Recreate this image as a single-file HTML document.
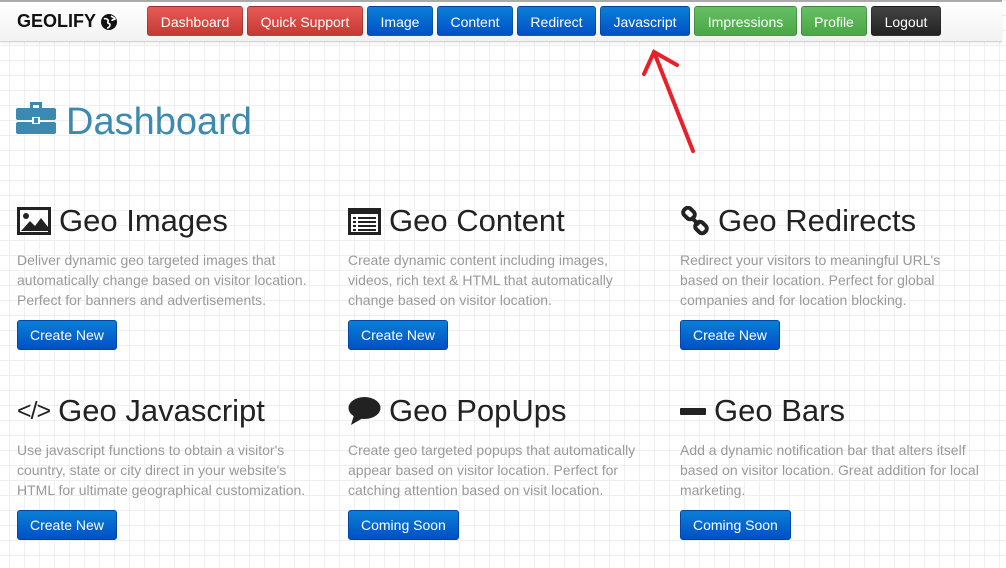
<!DOCTYPE html>
<html><head><style>
*{margin:0;padding:0;box-sizing:border-box}
body{width:1006px;height:568px;overflow:hidden;font-family:"Liberation Sans",sans-serif;background-color:#fff;
background-image:linear-gradient(#efefef 1px,transparent 1px),linear-gradient(90deg,#efefef 1px,transparent 1px);background-size:15px 15px;background-position:9px 0;position:relative}
.nav{position:absolute;left:0;top:0;width:1002px;height:42px;background:linear-gradient(#fff,#f2f2f2);border-top:2px solid #aaa;border-bottom:1px solid #d4d4d4;box-shadow:0 1px 3px rgba(0,0,0,.08)}
.brand{position:absolute;left:17px;top:9px;font-weight:bold;font-size:18px;color:#111;display:flex;align-items:center;gap:5px}
.b{position:absolute;top:4px;height:30px;border-radius:3px;color:#fff;font-size:14px;line-height:30px;text-align:center;border:1px solid rgba(0,0,0,.2)}
.r{background:linear-gradient(#e85a56,#c43a33)}
.bl{background:linear-gradient(#0a7fd6,#0050c6)}
.g{background:linear-gradient(#66c064,#4ba647)}
.k{background:linear-gradient(#444,#222)}
h1{position:absolute;left:66px;top:101px;font-size:38px;font-weight:normal;color:#3d8ab0}
.col{position:absolute;width:300px}
.col h2{font-size:31px;font-weight:normal;color:#222;height:38px;display:flex;align-items:center;gap:8px;white-space:nowrap}
.col p{margin-top:10px;font-size:14px;line-height:20px;color:#999}
.btn{display:inline-block;margin-top:10px;height:30px;line-height:28px;padding:0 12px;border-radius:3px;color:#fff;font-size:14px;background:linear-gradient(#0a7fd6,#0050c6);border:1px solid #0048a8}
</style></head><body>
<div class="nav">
<div class="brand">GEOLIFY <svg width="16" height="16" viewBox="0 0 16 16"><circle cx="8" cy="8" r="8" fill="#111"/><path d="M3 5c2-1 3 0 4 1s-1 2 0 3 2 0 2 2-2 3-3 3M10 2c1 1 3 1 4 3-1 1-3 0-3 2" fill="none" stroke="#fff" stroke-width="1.6"/></svg></div>
<div class="b r" style="left:147px;width:96px">Dashboard</div>
<div class="b r" style="left:247px;width:116px">Quick Support</div>
<div class="b bl" style="left:367px;width:66px">Image</div>
<div class="b bl" style="left:437px;width:76px">Content</div>
<div class="b bl" style="left:517px;width:79px">Redirect</div>
<div class="b bl" style="left:600px;width:90px">Javascript</div>
<div class="b g" style="left:694px;width:103px">Impressions</div>
<div class="b g" style="left:801px;width:66px">Profile</div>
<div class="b k" style="left:871px;width:70px">Logout</div>
</div>
<svg style="position:absolute;left:640px;top:48px" width="60" height="110"><g stroke="#e8202a" stroke-width="4" fill="none" stroke-linecap="round"><path d="M53 103L14 4M4 26L14 4L37 17"/></g></svg>
<svg style="position:absolute;left:16px;top:101px" width="40" height="34" viewBox="0 0 40 34"><path d="M14 1h12v6h-3V4h-6v3h-3z" fill="#3d8ab0"/><rect x="0" y="7" width="40" height="12" rx="2" fill="#3d8ab0"/><rect x="0" y="21" width="40" height="12" rx="2" fill="#3d8ab0"/><rect x="16" y="16" width="8" height="7" fill="#fff"/><rect x="18" y="17" width="4" height="5" fill="#3d8ab0"/></svg>
<h1>Dashboard</h1>

<div class="col" style="left:17px;top:202px"><h2><svg width="34" height="28"><rect x="1.5" y="1.5" width="31" height="25" fill="none" stroke="#222" stroke-width="3"/><circle cx="9" cy="9" r="3" fill="#222"/><path d="M4 24L13 14l5 5 6-8 7 9v4z" fill="#222"/></svg>Geo Images</h2>
<p>Deliver dynamic geo targeted images that automatically change based on visitor location. Perfect for banners and advertisements.</p><span class="btn">Create New</span></div>
<div class="col" style="left:348px;top:202px"><h2><svg width="33" height="27"><rect x="1.5" y="1.5" width="30" height="24" fill="none" stroke="#222" stroke-width="3"/><rect x="1" y="1" width="31" height="5" fill="#222"/><g fill="#222"><rect x="5" y="9" width="3" height="2"/><rect x="10" y="9" width="18" height="2"/><rect x="5" y="13" width="3" height="2"/><rect x="10" y="13" width="18" height="2"/><rect x="5" y="17" width="3" height="2"/><rect x="10" y="17" width="18" height="2"/><rect x="5" y="21" width="3" height="2"/><rect x="10" y="21" width="18" height="2"/></g></svg>Geo Content</h2>
<p>Create dynamic content including images, videos, rich text &amp; HTML that automatically change based on visitor location.</p><span class="btn">Create New</span></div>
<div class="col" style="left:680px;top:202px"><h2><svg width="30" height="30"><g fill="none" stroke="#222" stroke-width="4"><rect x="3" y="3" width="12" height="9" rx="4" transform="rotate(45 9 7.5)"/><rect x="15" y="17" width="12" height="9" rx="4" transform="rotate(45 21 21.5)"/><path d="M11 11l8 8"/></g></svg>Geo Redirects</h2>
<p>Redirect your visitors to meaningful URL's based on their location. Perfect for global companies and for location blocking.</p><span class="btn">Create New</span></div>

<div class="col" style="left:17px;top:392px"><h2><span style="font-size:25px;letter-spacing:-1px">&lt;/&gt;</span>Geo Javascript</h2>
<p>Use javascript functions to obtain a visitor's country, state or city direct in your website's HTML for ultimate geographical customization.</p><span class="btn">Create New</span></div>
<div class="col" style="left:348px;top:392px"><h2><svg width="33" height="30"><ellipse cx="16.5" cy="12" rx="16" ry="11" fill="#222"/><path d="M6 19L3 29l12-7z" fill="#222"/></svg>Geo PopUps</h2>
<p>Create geo targeted popups that automatically appear based on visitor location. Perfect for catching attention based on visit location.</p><span class="btn">Coming Soon</span></div>
<div class="col" style="left:680px;top:392px"><h2><svg width="26" height="10"><rect y="2" width="26" height="7" rx="1" fill="#222"/></svg>Geo Bars</h2>
<p>Add a dynamic notification bar that alters itself based on visitor location. Great addition for local marketing.</p><span class="btn">Coming Soon</span></div>
</body></html>
